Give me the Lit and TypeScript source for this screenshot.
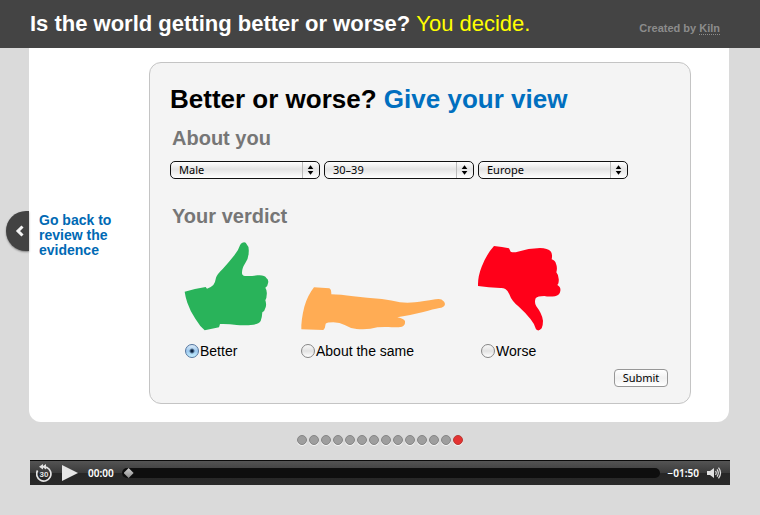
import { LitElement, html, css, svg } from "lit";
import { customElement, state } from "lit/decorators.js";

interface Verdict {
  id: string;
  label: string;
  width: number;
  viewBox: string;
  tone: string;
  path: string;
}

const VERDICTS: Verdict[] = [
  {
    id: "better",
    label: "Better",
    width: 85,
    viewBox: "45 33 255 270",
    tone: "green",
    path: "M217 38 Q227 34 230 43 Q238 50 236 68 Q236 84 226 99 Q215 116 216 130 Q216 137 225 138 Q245 139 262 136 Q284 134 289 144 Q297 149 294 160 Q293 170 286 173 Q292 182 290 195 Q290 206 286 211 Q290 222 287 232 Q284 244 277 247 Q276 264 272 273 Q267 282 250 284 Q225 287 200 285 Q175 281 150 282 L147 292 Q126 296 104 301 Q90 289 76 266 Q60 242 52 218 Q46 200 44 185 Q74 176 107 171 L111 176 Q122 173 130 165 Q136 157 138 143 Q142 132 158 117 Q176 98 193 76 Q206 60 210 46 Q212 40 217 38 Z",
  },
  {
    id: "same",
    label: "About the same",
    width: 144,
    viewBox: "33 -87 432 270",
    tone: "orange",
    path: "M72 52 L118 55 Q124 57 124 73 Q150 73 190 79 Q230 84 276 87 Q305 91 330 97 Q352 99 375 97 Q400 94 436 88 Q455 85 459 92 Q467 98 464 106 Q461 113 448 114 Q430 117 400 126 Q360 136 322 142 Q343 146 345 154 Q347 166 336 170 Q320 173 296 171 Q276 170 262 172 Q235 180 200 177 Q180 175 164 165 Q150 157 130 157 Q112 157 107 161 Q106 174 100 180 L34 178 Q33 150 43 110 Q53 76 72 52 Z",
  },
  {
    id: "worse",
    label: "Worse",
    width: 83,
    viewBox: "48 18 249 270",
    tone: "red",
    path: "M87 33 Q112 35 132 40 L137 50 Q146 54 158 50 Q190 40 225 39 Q248 39 258 50 Q263 58 260 73 Q271 77 273 86 Q278 98 274 112 Q283 122 281 140 Q281 146 277 150 Q288 156 286 168 Q284 181 270 184 Q250 186 238 183 Q218 183 212 190 Q207 202 214 214 Q231 236 234 257 Q234 272 230 280 Q221 291 213 283 Q208 266 197 253 Q180 232 160 214 Q140 198 133 178 Q128 166 121 162 Q114 158 106 159 Q70 157 39 153 Q38 125 50 95 Q65 57 87 33 Z",
  },
];

@customElement("app-root")
export class AppRoot extends LitElement {
  @state() private verdict = "better";
  @state() private slide = 13;

  static styles = css`
    :host {
      display: block;
      min-height: 100vh;
      background: #dadada;
      color: #000;
      font-family: "Liberation Sans", Arial, sans-serif;
    }
    * {
      box-sizing: border-box;
    }
    h1,
    h2,
    p {
      margin: 0;
    }
    button {
      padding: 0;
      border: 0;
      background: none;
      font: inherit;
      color: inherit;
      cursor: pointer;
    }
    svg {
      display: block;
    }
    .banner {
      display: flex;
      align-items: center;
      justify-content: space-between;
      height: 48px;
      padding: 0 40px 0 30px;
      background: #444;
    }
    .title {
      font-size: 22px;
      line-height: 28px;
      color: #fff;
    }
    .title-tail {
      font-weight: 400;
      color: #ff0;
    }
    .credit {
      padding-top: 8px;
      font-size: 11px;
      line-height: 12px;
      font-weight: 700;
      color: #8c8c8c;
    }
    .credit-link {
      display: inline-block;
      border-bottom: 1px dotted #8c8c8c;
      color: inherit;
      text-decoration: none;
    }
    .stage {
      position: relative;
      display: flex;
      align-items: center;
      margin: 0 31px 0 29px;
      padding: 14px 38px 18px 0;
      border-radius: 0 0 12px 12px;
      background: #fff;
    }
    .prev {
      position: absolute;
      right: 100%;
      top: 163px;
      display: flex;
      align-items: center;
      justify-content: center;
      width: 23px;
      height: 40px;
      padding-left: 3px;
      border-radius: 20px 0 0 20px;
      background: #424242;
      box-shadow: 0 1px 2px rgba(0, 0, 0, 0.4);
    }
    .back {
      flex: 0 0 120px;
      padding: 4px 20px 0 10px;
      font-size: 14px;
      line-height: 15px;
      font-weight: 700;
      color: #0069b4;
      text-decoration: none;
    }
    .card {
      flex: 1;
      display: flex;
      flex-direction: column;
      padding: 20px 22px 16px 20px;
      border: 1px solid #c4c4c4;
      border-radius: 12px;
      background: #f4f4f4;
    }
    .heading {
      font-size: 26px;
      line-height: 32px;
    }
    .heading-tail {
      color: #006fbf;
    }
    .section {
      padding-left: 2px;
      font-size: 20px;
      line-height: 24px;
      color: #767676;
    }
    .about {
      margin-top: 11px;
    }
    .selects {
      display: flex;
      gap: 4px;
      margin-top: 11px;
    }
    .picker {
      position: relative;
      flex: 0 1 150px;
    }
    .select {
      appearance: none;
      display: block;
      width: 100%;
      height: 18px;
      margin: 0;
      padding: 0 20px 0 8px;
      border: 1px solid #111;
      border-radius: 5px;
      background: linear-gradient(#fff, #e4e4e4 45%, #fff);
      color: #000;
      font: 11px/16px "Noto Sans", "Open Sans", sans-serif;
    }
    .arrows {
      position: absolute;
      top: 1px;
      right: 1px;
      border-left: 1px solid #bbb;
      pointer-events: none;
    }
    .verdict {
      margin-top: 25px;
    }
    .options {
      display: grid;
      grid-template-columns: 116px 180px 1fr;
      margin: 13px 0 0 15px;
    }
    .option {
      display: flex;
      flex-direction: column;
      gap: 10px;
    }
    .hand {
      height: 90px;
      overflow: visible;
    }
    .green {
      fill: #29b35a;
    }
    .orange {
      fill: #ffac54;
    }
    .red {
      fill: #ff0019;
    }
    .choice {
      display: flex;
      align-items: center;
      gap: 1px;
      font-size: 14px;
      line-height: 20px;
    }
    .radio {
      appearance: none;
      flex: none;
      width: 14px;
      height: 14px;
      margin: 0;
      border: 1px solid #868686;
      border-radius: 50%;
      background: linear-gradient(#f8f8f8, #e2e2e2 50%, #fff);
    }
    .radio:checked {
      border-color: #52749f;
      background: radial-gradient(circle, #0c2340 0 1px, transparent 3px),
        linear-gradient(#dcebf8, #9cc8ee 50%, #c5f0ff);
    }
    .submit {
      align-self: flex-end;
      width: 54px;
      height: 18px;
      margin-top: 8px;
      border: 1px solid #979797;
      border-radius: 4px;
      background: linear-gradient(#fff, #f0f0f0 50%, #fff);
      font: 11px/16px "Noto Sans", "Open Sans", sans-serif;
    }
    .dots {
      display: flex;
      justify-content: center;
      gap: 2px;
      margin-top: 13px;
    }
    .dot {
      width: 10px;
      height: 10px;
      border: 1px solid #858585;
      border-radius: 50%;
      background: #9e9e9e;
      box-shadow: 0 1px 0 #f4f4f4;
    }
    .dot-current {
      border-color: #b83a33;
      background: #e43232;
    }
    .player {
      display: flex;
      align-items: center;
      height: 25px;
      margin: 15px 30px 0;
      padding: 0 8px 0 6px;
      border-top: 1px solid #0c0c0c;
      background: linear-gradient(#545454, #3a3a3a 50%, #262626 51%, #2a2a2a);
      color: #fff;
    }
    .play {
      margin: 0 2px 0 10px;
    }
    .time {
      margin: 0 8px;
      font: 600 10px/12px "Noto Sans", "Open Sans", sans-serif;
    }
    .seek {
      appearance: none;
      flex: 1;
      min-width: 0;
      height: 10px;
      margin: 0;
      padding: 0 2px;
      border-radius: 5px;
      background: #0e0e0e;
    }
    .seek::-webkit-slider-thumb {
      appearance: none;
      width: 10px;
      height: 10px;
      background: linear-gradient(#d0d0d0, #8a8a8a);
      clip-path: polygon(50% 0, 100% 50%, 50% 100%, 0 50%);
    }
  `;

  private picker(name: string, options: string[]) {
    return html`<div class="picker">
      <select class="select" aria-label=${name}>
        ${options.map((o) => html`<option>${o}</option>`)}
      </select>
      <svg class="arrows" width="17" height="16" viewBox="0 0 17 16" aria-hidden="true">
        <path d="M5 7 L8 3 L11 7 Z M5 9 L8 13 L11 9 Z" />
      </svg>
    </div>`;
  }

  private option(v: Verdict) {
    return html`<div class="option">
      <svg class="hand ${v.tone}" width=${v.width} height="90" viewBox=${v.viewBox} aria-hidden="true">
        ${svg`<path d=${v.path} />`}
      </svg>
      <label class="choice">
        <input
          class="radio"
          type="radio"
          name="verdict"
          .checked=${this.verdict === v.id}
          @change=${() => (this.verdict = v.id)}
        />${v.label}
      </label>
    </div>`;
  }

  render() {
    return html`
      <header class="banner">
        <h1 class="title">
          Is the world getting better or worse?
          <span class="title-tail">You decide.</span>
        </h1>
        <p class="credit">Created by <a class="credit-link" href="#kiln">Kiln</a></p>
      </header>

      <main class="stage">
        <button class="prev" aria-label="Previous">
          <svg width="9" height="12" viewBox="0 0 9 12" fill="none" stroke="#f4f4f4" stroke-width="3">
            <path d="M7.5 1.5 L3 6 L7.5 10.5" />
          </svg>
        </button>
        <a class="back" href="#evidence">Go back to review the evidence</a>
        <form class="card" @submit=${(e: Event) => e.preventDefault()}>
          <h1 class="heading">
            Better or worse? <span class="heading-tail">Give your view</span>
          </h1>
          <h2 class="section about">About you</h2>
          <div class="selects">
            ${this.picker("Gender", ["Male", "Female"])}
            ${this.picker("Age", ["30–39", "40–49"])}
            ${this.picker("Region", ["Europe", "Asia"])}
          </div>
          <h2 class="section verdict">Your verdict</h2>
          <div class="options">${VERDICTS.map((v) => this.option(v))}</div>
          <button class="submit" type="submit">Submit</button>
        </form>
      </main>

      <nav class="dots" aria-label="Slides">
        ${Array.from(
          { length: 14 },
          (_, i) => html`<button
            class="dot ${i === this.slide ? "dot-current" : ""}"
            aria-label="Slide ${i + 1}"
            @click=${() => (this.slide = i)}
          ></button>`
        )}
      </nav>

      <section class="player" aria-label="Audio player">
        <button aria-label="Back 30 seconds">
          <svg width="16" height="18" viewBox="0 0 16 18">
            <path d="M1.6 6.5 A7.1 7.1 0 1 0 11 3.6 L8 2.8" fill="none" stroke="#e4e4e4" stroke-width="1.7" />
            <path d="M3 2.8 L7 0 V5.6 Z M6 2.8 L10 0 V5.6 Z" fill="#e4e4e4" />
            <text x="8" y="13" text-anchor="middle" font-size="8" font-weight="700" fill="#e4e4e4">30</text>
          </svg>
        </button>
        <button class="play" aria-label="Play">
          <svg width="16" height="16" viewBox="0 0 16 16"><path d="M0 0 L16 8 L0 16 Z" fill="#e6e6e6" /></svg>
        </button>
        <span class="time">00:00</span>
        <input class="seek" type="range" min="0" max="110" value="0" aria-label="Position" />
        <span class="time">−01:50</span>
        <button aria-label="Volume">
          <svg width="15" height="12" viewBox="0 0 15 12">
            <path d="M0 4 H3 L7 1 V11 L3 8 H0 Z" fill="#e0e0e0" />
            <path d="M8.5 4 Q10 6 8.5 8 M10 2.3 Q12.6 6 10 9.7 M11.5 .7 Q15.6 6 11.5 11.3" fill="none" stroke="#e0e0e0" stroke-width="1.2" />
          </svg>
        </button>
      </section>
    `;
  }
}
